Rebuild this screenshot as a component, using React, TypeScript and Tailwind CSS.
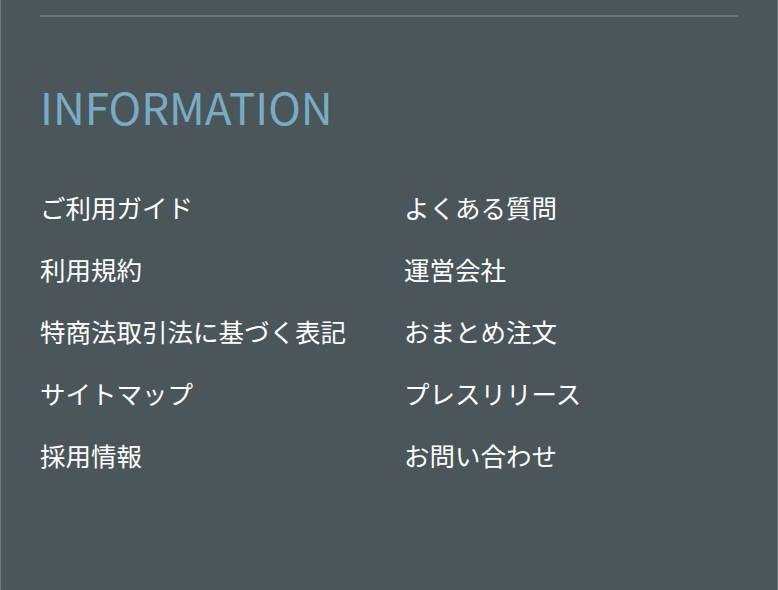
import React from 'react';

const links: [string, string][] = [
  ['ご利用ガイド', 'よくある質問'],
  ['利用規約', '運営会社'],
  ['特商法取引法に基づく表記', 'おまとめ注文'],
  ['サイトマップ', 'プレスリリース'],
  ['採用情報', 'お問い合わせ'],
];

export default function App() {
  return (
    <div className="h-[590px] w-[778px] border-x border-[#6f7a7d] bg-[#4a565a] px-[39px] pt-[15px] font-['Noto_Sans_CJK_JP','Noto_Sans',sans-serif]">
      <div className="h-[2px] bg-[#68777a]" />
      <h2 className="mt-[66px] text-[44px] leading-[46px] font-normal text-[#79abc3]">
        INFORMATION
      </h2>
      <ul className="mt-[59px] grid grid-cols-[364px_1fr] gap-y-[24px]">
        {links.flat().map((label) => (
          <li key={label} className="text-[25.5px] leading-[38px] text-white">
            <a href="#">{label}</a>
          </li>
        ))}
      </ul>
    </div>
  );
}
